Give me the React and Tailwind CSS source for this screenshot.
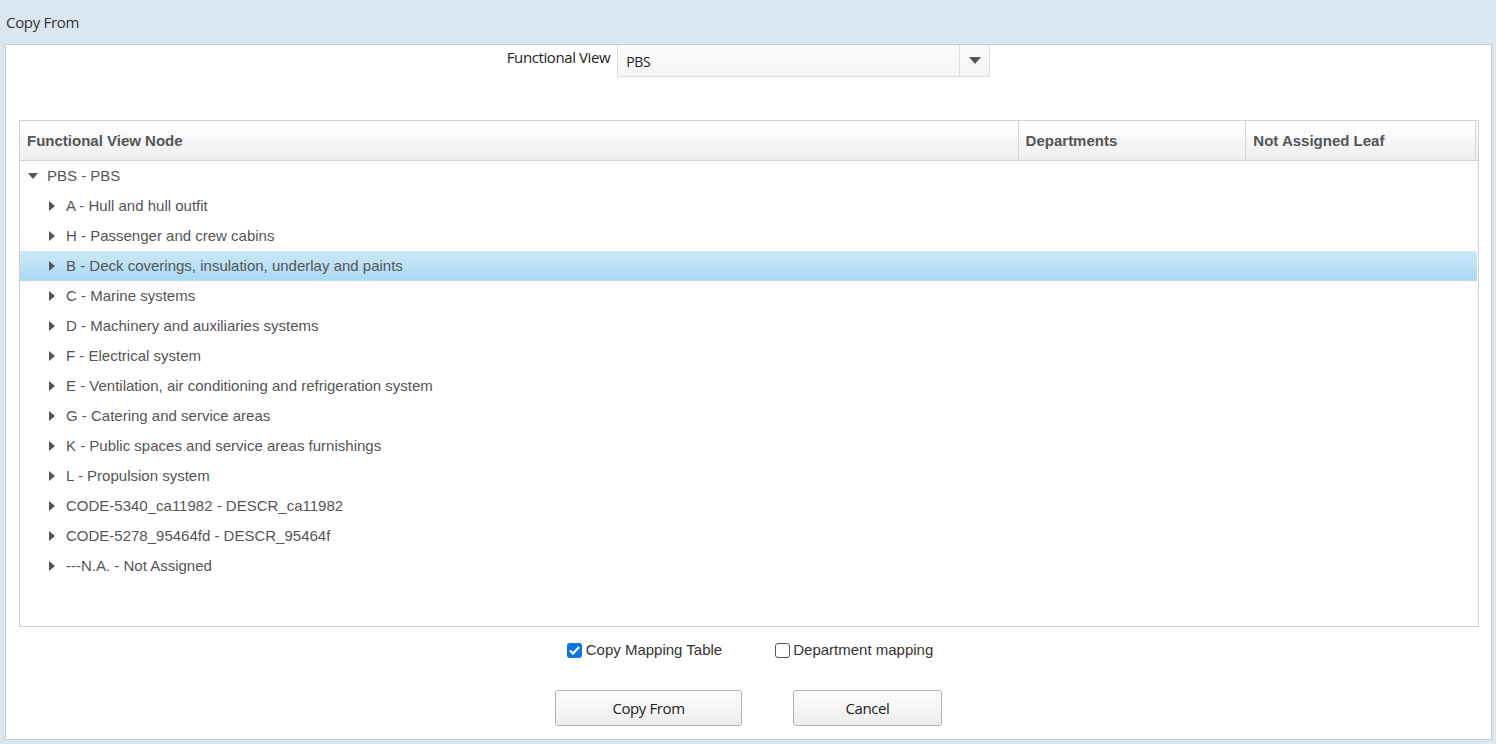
import React from "react";

const rows = [
  "A - Hull and hull outfit",
  "H - Passenger and crew cabins",
  "B - Deck coverings, insulation, underlay and paints",
  "C - Marine systems",
  "D - Machinery and auxiliaries systems",
  "F - Electrical system",
  "E - Ventilation, air conditioning and refrigeration system",
  "G - Catering and service areas",
  "K - Public spaces and service areas furnishings",
  "L - Propulsion system",
  "CODE-5340_ca11982 - DESCR_ca11982",
  "CODE-5278_95464fd - DESCR_95464f",
  "---N.A. - Not Assigned",
];

const RightArrow = () => (
  <svg width="6" height="10" viewBox="0 0 6 10" className="shrink-0">
    <path d="M0 0 L6 5 L0 10 Z" fill="#555" />
  </svg>
);

const DownArrow = () => (
  <svg width="10" height="6" viewBox="0 0 10 6" className="shrink-0">
    <path d="M0 0 L10 0 L5 6 Z" fill="#555" />
  </svg>
);

export default function App() {
  return (
    <div className="w-[1496px] h-[744px] bg-[#dae6f0] flex flex-col overflow-hidden">
      <div className="h-[44px] flex items-center pl-[6px] text-[15px] text-[#333] font-['Open_Sans',sans-serif] tracking-[-0.3px]">
        Copy From
      </div>
      <div className="ml-[5px] mr-[4px] mb-[4px] flex-1 bg-white border border-[#c4ccd4] flex flex-col">
        {/* Functional View row */}
        <div className="flex justify-center h-[75px]">
          <div className="flex items-start">
            <span className="text-[15px] text-[#222] font-['Open_Sans',sans-serif] tracking-[-0.4px] mt-[1px] mr-[7px]">
              Functional View
            </span>
            <div className="w-[373px] h-[32px] border border-[#dcdcdc] border-t-0 bg-gradient-to-b from-[#fbfbfb] to-[#f5f5f5] flex">
              <div className="flex-1 flex items-center pl-[8px] pt-[1px] text-[14px] text-[#222] font-['Open_Sans',sans-serif] tracking-[-0.3px]">
                PBS
              </div>
              <div className="w-[30px] border-l border-[#dcdcdc] flex items-center justify-center">
                <svg width="12" height="7" viewBox="0 0 12 7">
                  <path d="M0 0 L12 0 L6 7 Z" fill="#555" />
                </svg>
              </div>
            </div>
          </div>
        </div>

        {/* Table */}
        <div className="ml-[13px] mr-[12px] h-[507px] border border-[#d0d0d0] flex flex-col font-['Liberation_Sans',Arial,sans-serif]">
          <div className="h-[40px] flex bg-gradient-to-b from-white to-[#eeeeee] border-b border-[#d3d3d3] pr-[2px]">
            <div className="w-[1000px] border-r border-[#d6d6d6] flex items-center pl-[7px] pt-[1px] text-[15px] font-bold text-[#555]">
              Functional View Node
            </div>
            <div className="w-[228px] border-r border-[#d6d6d6] flex items-center pl-[7px] pt-[1px] text-[15px] font-bold text-[#555]">
              Departments
            </div>
            <div className="w-[230px] border-r border-[#d6d6d6] flex items-center pl-[7px] pt-[1px] text-[15px] font-bold text-[#555]">
              Not Assigned Leaf
            </div>
          </div>
          <div className="flex-1 flex flex-col text-[15px] text-[#555]">
            <div className="h-[30px] flex items-center pl-[8px] gap-[9px]">
              <DownArrow />
              <span className="pt-[1px]">PBS - PBS</span>
            </div>
            {rows.map((r, i) => (
              <div
                key={r}
                className={
                  "h-[30px] flex items-center pl-[29px] gap-[11px] " +
                  (i === 2 ? "bg-gradient-to-b from-[#cbe8f8] to-[#a9d9f4] mr-[1px]" : "")
                }
              >
                <RightArrow />
                <span className="pt-[1px]">{r}</span>
              </div>
            ))}
          </div>
        </div>

        {/* Checkboxes */}
        <div className="h-[47px] flex justify-center items-center gap-[53px] pl-[3px] text-[15px] text-[#333] font-['Liberation_Sans',Arial,sans-serif]">
          <label className="flex items-center gap-[4px]">
            <span className="w-[15px] h-[15px] rounded-[3px] bg-[#0b75e6] flex items-center justify-center">
              <svg width="11" height="9" viewBox="0 0 11 9">
                <path d="M1 4.5 L4 7.5 L10 1" stroke="white" strokeWidth="2.2" fill="none" />
              </svg>
            </span>
            Copy Mapping Table
          </label>
          <label className="flex items-center gap-[3px]">
            <span className="w-[15px] h-[15px] rounded-[3px] border border-[#555] bg-white" />
            Department mapping
          </label>
        </div>

        {/* Buttons */}
        <div className="flex justify-center gap-[51px] mt-[16px] font-['Open_Sans',sans-serif] text-[15px] text-[#222]">
          <button className="w-[187px] h-[36px] rounded-[3px] border border-[#b4b4b4] bg-gradient-to-b from-[#fdfdfd] to-[#eeeeee] tracking-[-0.4px]">
            Copy From
          </button>
          <button className="w-[149px] h-[36px] rounded-[3px] border border-[#b4b4b4] bg-gradient-to-b from-[#fdfdfd] to-[#eeeeee] tracking-[-0.4px]">
            Cancel
          </button>
        </div>
      </div>
    </div>
  );
}
